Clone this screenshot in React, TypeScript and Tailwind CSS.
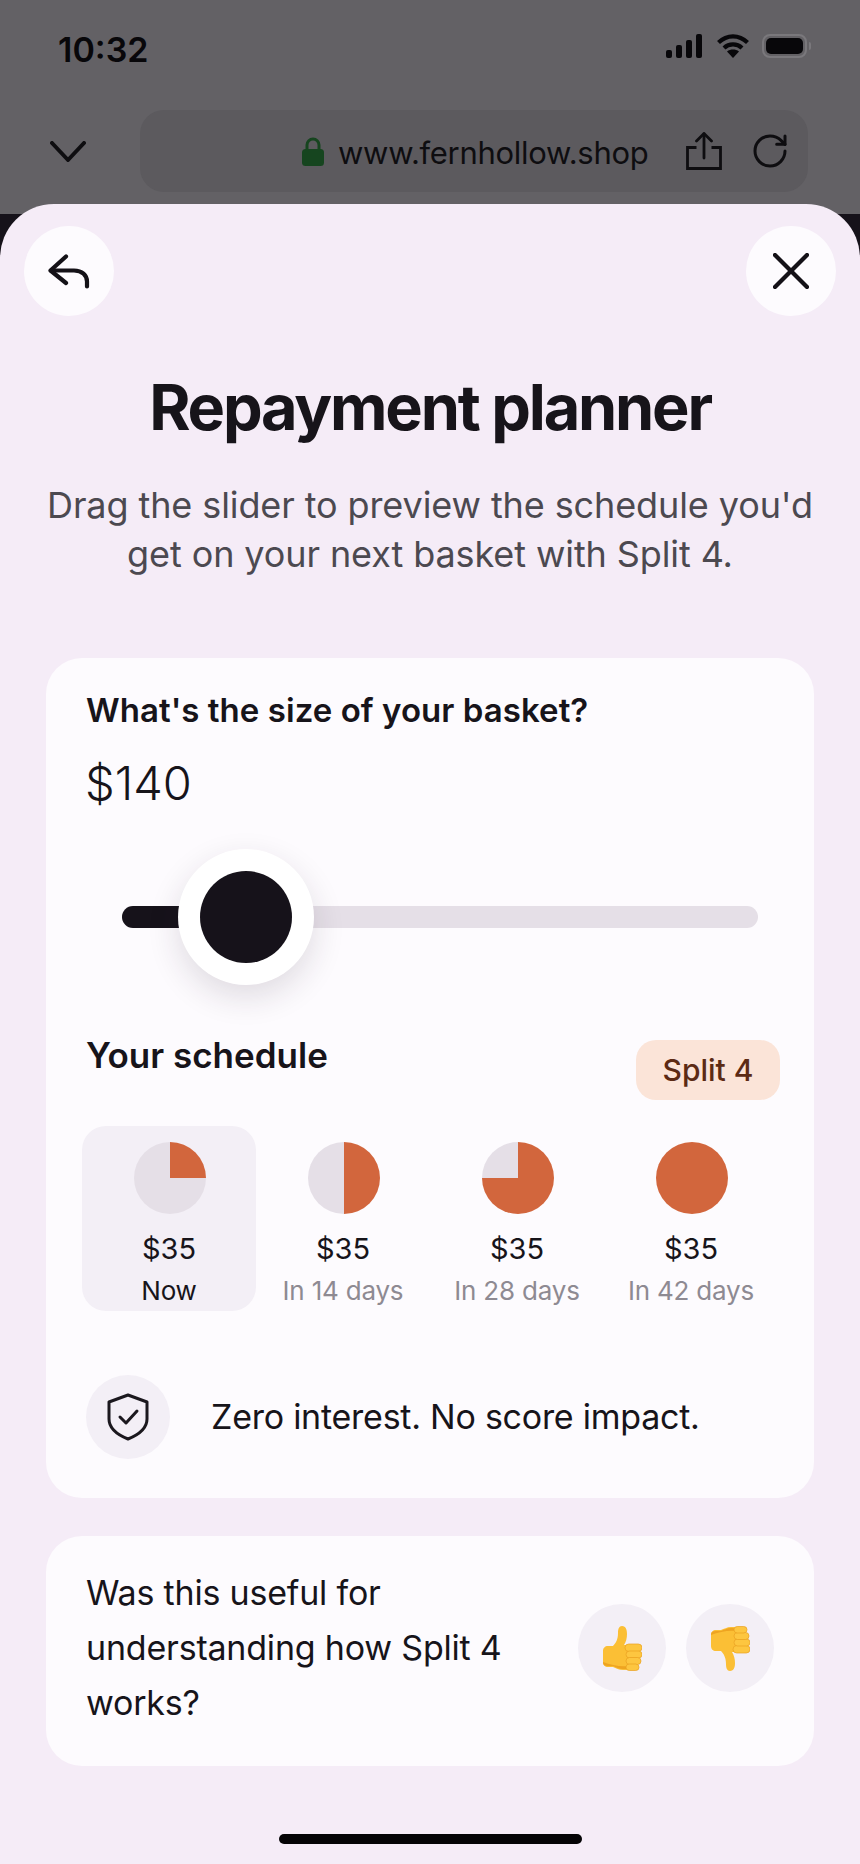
import { RotateCw } from "lucide-react";

const SCHEDULE = [
  { amount: "$35", label: "Now", pie: "bg-[conic-gradient(#d2663d_0_25%,#e5dfe7_25%_100%)]", active: true },
  { amount: "$35", label: "In 14 days", pie: "bg-[conic-gradient(#d2663d_0_50%,#e5dfe7_50%_100%)]", active: false },
  { amount: "$35", label: "In 28 days", pie: "bg-[conic-gradient(#d2663d_0_75%,#e5dfe7_75%_100%)]", active: false },
  { amount: "$35", label: "In 42 days", pie: "bg-[#d2663d]", active: false },
];

function StatusIcons() {
  return (
    <div className="flex items-center">
      <svg width="36" height="24" viewBox="0 0 36 24" fill="#08070a">
        <rect x="0" y="16" width="6" height="8" rx="2" />
        <rect x="10" y="11" width="6" height="13" rx="2" />
        <rect x="20" y="6" width="6" height="18" rx="2" />
        <rect x="30" y="0" width="6" height="24" rx="2" />
      </svg>
      <svg className="ml-[15px]" width="32" height="24" viewBox="0 0 32 24" fill="none" stroke="#08070a" strokeWidth="4.200">
        <path d="M1.500 8.500C10 .2 22 .2 30.500 8.500" />
        <path d="M7 14c5-4.800 13-4.800 18 0" />
        <path d="M16 24l-6-6.500c3.500-2.600 8.500-2.600 12 0z" fill="#08070a" stroke="none" />
      </svg>
      <div className="ml-[13px] flex items-center gap-[2px]">
        <div className="w-[45px] h-[24px] rounded-[8px] border-2 border-[#7a787c] p-[2px]">
          <div className="w-full h-full rounded-[5px] bg-[#08070a]" />
        </div>
        <div className="w-[2px] h-[8px] rounded-r-sm bg-[#7a787c]" />
      </div>
    </div>
  );
}

function Lock() {
  return (
    <svg width="22" height="29" viewBox="0 0 22 29">
      <path d="M5 14V8a6 6 0 0 1 12 0v6" fill="none" stroke="#16451f" strokeWidth="3" />
      <rect x="0" y="12" width="22" height="17" rx="3.500" fill="#16451f" />
    </svg>
  );
}

function ShareIcon() {
  return (
    <svg width="36" height="38" viewBox="0 0 36 38" fill="none" stroke="#0e0d10" strokeWidth="2.800">
      <path d="M10.500 15.500H1.500v21h33v-21H25.500" />
      <path d="M18 26V2" strokeLinecap="round" />
      <path d="M10.500 9 18 1.500 25.500 9" strokeLinecap="round" strokeLinejoin="round" />
    </svg>
  );
}

function BackArrow() {
  return (
    <svg width="42" height="35" viewBox="0 0 42 35" fill="none" stroke="#141117" strokeWidth="4.200" strokeLinecap="round" strokeLinejoin="round">
      <path d="M18 2.500 2.500 16.500 18 29" />
      <path d="M3 16.500h23c8 0 13 4.500 13 11v5" />
    </svg>
  );
}

function CloseIcon() {
  return (
    <svg width="36" height="36" viewBox="0 0 36 36" fill="none" stroke="#141117" strokeWidth="4.200" strokeLinecap="round">
      <path d="M2 2 34 34" />
      <path d="M34 2 2 34" />
    </svg>
  );
}

function ShieldIcon() {
  return (
    <svg width="44" height="48" viewBox="0 0 44 48" fill="none" stroke="#1b181e" strokeWidth="3" strokeLinecap="round" strokeLinejoin="round">
      <path d="M22 2 41 9v17c0 10-9 16-19 20C12 42 3 36 3 26V9z" />
      <path d="m14 24 6 6 11-12" />
    </svg>
  );
}

function ThumbEmoji({ down }: { down?: boolean }) {
  return (
    <svg width="40" height="45" viewBox="0 0 40 45" className={down ? "-scale-y-100" : ""}>
      <path
        d="M1 25c0-3 2-5 5-5h5c3-3 5-7 5-13 0-4 1-7 4-7 4 0 5 4 5 8 0 4-1 8-3 11h8v23c-3 2-6 2-9 2-4 0-7-2-10-3H6c-3 0-5-2-5-5z"
        fill="#fbbf35"
      />
      <path d="M1 37c0 2 2 3 5 3h5c3 1 6 3 10 3 2 0 4 0 6-1v-2c-9 1-18-1-26-4z" fill="#eea421" />
      <rect x="23" y="18" width="17" height="7.500" rx="3.700" fill="#fdc640" stroke="#e9a11f" strokeWidth="0.700" />
      <rect x="24" y="25" width="16" height="7" rx="3.500" fill="#fdc640" stroke="#e9a11f" strokeWidth="0.700" />
      <rect x="24" y="31.500" width="15" height="7" rx="3.500" fill="#fdc640" stroke="#e9a11f" strokeWidth="0.700" />
      <rect x="24" y="38" width="13" height="6.500" rx="3.200" fill="#fdc640" stroke="#e9a11f" strokeWidth="0.700" />
    </svg>
  );
}

export default function App() {
  return (
    <div className="w-[860px] h-[1864px] flex flex-col overflow-hidden font-['Inter',sans-serif] text-[#17141a] bg-[linear-gradient(#636165_214px,#16121a_214px)]">
      {/* Browser chrome behind the sheet */}
      <div className="h-[204px] shrink-0 flex flex-col">
        <div className="h-[110px] pl-[58px] pr-[49px] flex items-start justify-between text-[#08070a]">
          <span className="mt-[29px] text-[34px] leading-[42px] font-semibold">10:32</span>
          <div className="mt-[34px]">
            <StatusIcons />
          </div>
        </div>
        <div className="flex items-center">
          <div className="w-[140px] pl-[50px]">
            <svg width="36" height="21" viewBox="0 0 36 21" fill="none" stroke="#0e0d10" strokeWidth="4" strokeLinecap="round" strokeLinejoin="round">
              <path d="M2 2 18 19 34 2" />
            </svg>
          </div>
          <div className="w-[668px] h-[82px] rounded-[24px] bg-[#5c5a5e] flex items-center pl-[162px]">
            <Lock />
            <span className="ml-[14px] mt-[3px] w-[310px] text-[31px] leading-[40px] tracking-[-0.3px] text-[#0e0d10]">www.fernhollow.shop</span>
            <div className="ml-[38px]">
              <ShareIcon />
            </div>
            <RotateCw className="ml-[28px]" size={40} color="#0e0d10" strokeWidth={1.800} />
          </div>
        </div>
      </div>

      {/* Sheet */}
      <div className="flex-1 rounded-t-[54px] bg-[#f5ecf7] pt-[22px] flex flex-col">
        <div className="px-[24px] flex justify-between">
          <button className="w-[90px] h-[90px] rounded-full bg-[#fdfbfe] flex items-center justify-center">
            <BackArrow />
          </button>
          <button className="w-[90px] h-[90px] rounded-full bg-[#fdfbfe] flex items-center justify-center">
            <CloseIcon />
          </button>
        </div>

        <h1 className="mt-[56px] text-center text-[63px] leading-[70px] font-bold tracking-[-2.200px]">Repayment planner</h1>
        <p className="mt-[39px] text-center text-[36px] leading-[49px] tracking-[-0.1px] text-[#4c4950]">
          Drag the slider to preview the schedule you'd
          <br />
          get on your next basket with Split 4.
        </p>

        <div className="mt-[79px] mx-[46px] rounded-[36px] bg-[#fdfbfe] pt-[31px] pb-[39px] pl-[40px] pr-[41px]">
          <h2 className="text-[33px] leading-[42px] font-semibold tracking-[0.05px]">What's the size of your basket?</h2>
          <div className="mt-[26px] ml-[-1px] text-[47px] leading-[52px] font-light">$140</div>

          {/* Slider */}
          <div className="mt-[40px] h-[136px] relative flex items-center pl-[36px] pr-[15px]">
            <div className="w-full h-[22px] rounded-full bg-[#e5dfe7] overflow-hidden">
              <div className="w-[124px] h-full bg-[#16121a]" />
            </div>
            <div className="absolute left-[92px] top-0 w-[136px] h-[136px] rounded-full bg-white shadow-[0_12px_32px_rgba(40,30,50,0.14)] flex items-center justify-center">
              <div className="w-[92px] h-[92px] rounded-full bg-[#16121a]" />
            </div>
          </div>

          <div className="mt-[50px] h-[66px] flex items-start justify-between">
            <h2 className="mt-[-2px] text-[35px] leading-[44px] font-semibold">Your schedule</h2>
            <div className="mt-[5px] mr-[-7px] w-[144px] h-[60px] rounded-[20px] bg-[#fbe4d8] flex items-center justify-center text-[30px] font-medium text-[#5c2a14]">
              Split 4
            </div>
          </div>

          <div className="mt-[25px] ml-[-4px] w-[696px] grid grid-cols-4">
            {SCHEDULE.map((item) => (
              <div
                key={item.label}
                className={`h-[185px] rounded-[24px] pt-[16px] flex flex-col items-center ${item.active ? "bg-[#f3eff6]" : ""}`}
              >
                <div className={`ml-[2px] w-[72px] h-[72px] rounded-full ${item.pie}`} />
                <div className="mt-[15px] text-[29px] leading-[40px]">{item.amount}</div>
                <div className={`mt-[2px] text-[26px] leading-[40px] tracking-[-0.2px] ${item.active ? "text-[#17141a]" : "text-[#8e8a92]"}`}>
                  {item.label}
                </div>
              </div>
            ))}
          </div>

          <div className="mt-[64px] flex items-center">
            <div className="w-[84px] h-[84px] rounded-full bg-[#f3eff6] flex items-center justify-center">
              <ShieldIcon />
            </div>
            <span className="ml-[41px] text-[34px] leading-[44px] tracking-[-0.25px]">Zero interest. No score impact.</span>
          </div>
        </div>

        <div className="mt-[38px] mx-[46px] h-[230px] rounded-[36px] bg-[#fdfbfe] pl-[40px] pr-[40px] pb-[6px] flex items-center justify-between">
          <p className="w-[440px] mt-[-2px] text-[34px] leading-[55px] tracking-[-0.2px]">Was this useful for understanding how Split 4 works?</p>
          <div className="flex gap-[20px]">
            <button className="w-[88px] h-[88px] rounded-full bg-[#f3eff6] flex items-center justify-center">
              <ThumbEmoji />
            </button>
            <button className="w-[88px] h-[88px] rounded-full bg-[#f3eff6] flex items-center justify-center">
              <ThumbEmoji down />
            </button>
          </div>
        </div>

        <div className="mt-[68px] mx-auto w-[303px] h-[10px] rounded-full bg-[#050406]" />
      </div>
    </div>
  );
}
